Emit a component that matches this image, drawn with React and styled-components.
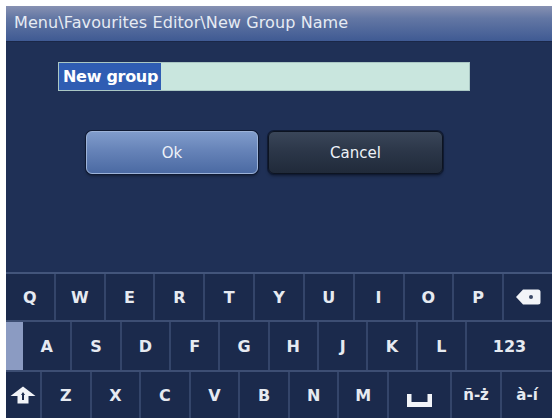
import React from "react";
import styled, { createGlobalStyle } from "styled-components";

const Global = createGlobalStyle`
  html, body { margin: 0; padding: 0; background: #ffffff; }
  body { font-family: "DejaVu Sans", Verdana, sans-serif; }
`;

const Page = styled.div`
  padding: 6px 2px 2px 6px;
  width: 554px;
  height: 420px;
  box-sizing: border-box;
`;

const Screen = styled.div`
  width: 546px;
  height: 412px;
  display: flex;
  flex-direction: column;
  background: #1f3056;
`;

const TitleBar = styled.div`
  height: 36px;
  flex: none;
  box-sizing: border-box;
  padding: 0 0 2px 8px;
  display: flex;
  align-items: center;
  background: linear-gradient(#8791b2 0%, #6377a4 35%, #3f5a93 100%);
  border-bottom: 1px solid #1a2748;
  color: #e6ebf3;
  font-size: 16px;
  letter-spacing: 0.1px;
  white-space: nowrap;
`;

const Content = styled.div`
  flex: 1;
  display: flex;
  flex-direction: column;
  padding: 20px 0 0 52px;
  background: #1f3056;
`;

const InputBox = styled.div`
  width: 412px;
  height: 29px;
  box-sizing: border-box;
  background: #c9e6de;
  border: 1px solid #aac7c4;
  display: flex;
  align-items: stretch;
`;

const Selected = styled.span`
  background: #2f5db3;
  color: #ffffff;
  font-weight: bold;
  font-size: 16px;
  padding: 0 3px 0 4px;
  display: flex;
  align-items: center;
  letter-spacing: -0.3px;
`;

const ButtonRow = styled.div`
  display: flex;
  gap: 10px;
  margin: 40px 0 0 28px;
`;

const Button = styled.div`
  width: ${(p) => p.$w}px;
  height: 43px;
  box-sizing: border-box;
  border-radius: 6px;
  display: flex;
  align-items: center;
  justify-content: center;
  font-size: 15px;
  color: #eef2f8;
  border: 1px solid ${(p) => (p.$primary ? "#9db3d8" : "#0d1421")};
  box-shadow: 0 0 0 1px #0f1a33, 0 2px 3px rgba(0, 0, 0, 0.4);
  background: ${(p) =>
    p.$primary
      ? "linear-gradient(#809ccb 0%, #6683b8 45%, #4b6aa3 100%)"
      : "linear-gradient(#3a4659 0%, #2c3749 45%, #202a3a 100%)"};
`;

const Keyboard = styled.div`
  flex: none;
  display: flex;
  flex-direction: column;
  border-top: 2px solid #43557b;
  background: #1b2a4c;
`;

const Row = styled.div`
  display: flex;
  height: ${(p) => p.$h}px;
  border-bottom: ${(p) => (p.$last ? "none" : "2px solid #3d4e73")};
`;

const Key = styled.div`
  flex: ${(p) => (p.$w ? `0 0 ${p.$w}px` : "1 1 0")};
  box-sizing: border-box;
  display: flex;
  align-items: center;
  justify-content: center;
  border-right: ${(p) => (p.$end ? "none" : "2px solid #34456a")};
  color: #e6eaf1;
  font-weight: bold;
  font-size: ${(p) => (p.$small ? 15 : 16)}px;
  background: #1b2a4c;
`;

const Spacer = styled.div`
  flex: 0 0 17px;
  background: #8b9bc2;
`;

const BackspaceIcon = () => (
  <svg width="25" height="16" viewBox="0 0 25 16">
    <path d="M0 8 L7 0.5 H22 Q24.5 0.5 24.5 3 V13 Q24.5 15.5 22 15.5 H7 Z" fill="#f2f4f8" />
    <circle cx="15" cy="8" r="2" fill="#3a4766" />
  </svg>
);

const ShiftIcon = () => (
  <svg width="26" height="18" viewBox="0 0 26 18">
    <path d="M13 0.5 L25.5 10 H18.5 V17.5 H7.5 V10 H0.5 Z" fill="#f2f4f8" />
    <path d="M13 6 L15 9 H14 V14 H12 V9 H11 Z" fill="#1b2a4c" />
  </svg>
);

const SpaceIcon = () => (
  <svg width="25" height="13" viewBox="0 0 25 13" style={{ marginTop: 10 }}>
    <path d="M0 0 H4.5 V8 H20.5 V0 H25 V13 H0 Z" fill="#f2f4f8" />
  </svg>
);

const row1 = ["Q", "W", "E", "R", "T", "Y", "U", "I", "O", "P"];
const row2 = ["A", "S", "D", "F", "G", "H", "J", "K", "L"];
const row3 = ["Z", "X", "C", "V", "B", "N", "M"];

export default function App() {
  return (
    <>
      <Global />
      <Page>
        <Screen>
          <TitleBar>Menu\Favourites Editor\New Group Name</TitleBar>
          <Content>
            <InputBox>
              <Selected>New group</Selected>
            </InputBox>
            <ButtonRow>
              <Button $primary $w={172}>Ok</Button>
              <Button $w={175}>Cancel</Button>
            </ButtonRow>
          </Content>
          <Keyboard>
            <Row $h={46}>
              {row1.map((k) => (
                <Key key={k}>{k}</Key>
              ))}
              <Key $end>
                <BackspaceIcon />
              </Key>
            </Row>
            <Row $h={48}>
              <Spacer />
              {row2.map((k) => (
                <Key key={k}>{k}</Key>
              ))}
              <Key $w={85} $end>123</Key>
            </Row>
            <Row $h={46} $last>
              <Key $w={36}>
                <ShiftIcon />
              </Key>
              {row3.map((k) => (
                <Key key={k}>{k}</Key>
              ))}
              <Key $w={63}>
                <SpaceIcon />
              </Key>
              <Key $w={50} $small>ñ-ż</Key>
              <Key $w={50} $end $small>à-í</Key>
            </Row>
          </Keyboard>
        </Screen>
      </Page>
    </>
  );
}
